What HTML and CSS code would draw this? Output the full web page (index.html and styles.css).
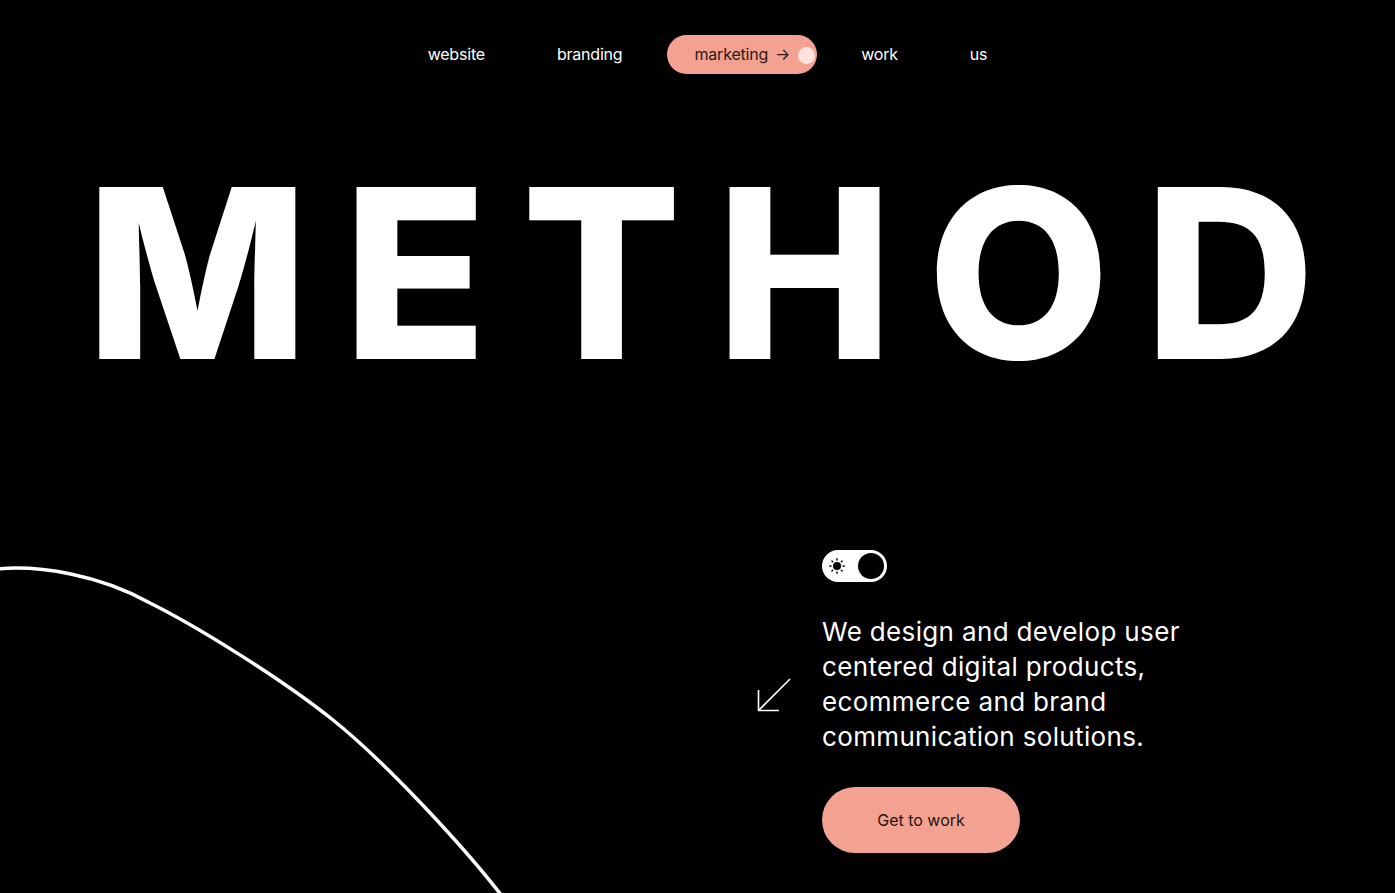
FILE: index.html
```html
<!DOCTYPE html>
<html lang="en">
<head>
<meta charset="utf-8">
<title>Method</title>
<link rel="stylesheet" href="styles.css">
</head>
<body>
<div class="page">
  <svg class="curve" width="1395" height="893" viewBox="0 0 1395 893" aria-hidden="true">
    <path d="M-4 569 C 40 565, 100 575, 150 603 C 200 628, 283 680, 333 720 C 383 760, 460 842, 502 896" fill="none" stroke="#fff" stroke-width="3.5"/>
  </svg>
  <nav class="nav">
    <a class="nav-item">website</a>
    <a class="nav-item">branding</a>
    <a class="nav-item nav-active">marketing <span class="nav-arrow">→</span><span class="nav-dot"></span></a>
    <a class="nav-item">work</a>
    <a class="nav-item">us</a>
  </nav>
  <h1 class="title">
    <span>M</span><span>E</span><span>T</span><span>H</span><span>O</span><span>D</span>
  </h1>
  <section class="intro">
    <div class="toggle">
      <svg class="sun" width="16" height="16" viewBox="0 0 16 16" aria-hidden="true">
        <circle cx="8" cy="8" r="4" fill="#000"/>
        <g stroke="#000" stroke-width="1.4" stroke-linecap="round">
          <line x1="8" y1="0.8" x2="8" y2="2"/>
          <line x1="8" y1="14" x2="8" y2="15.2"/>
          <line x1="0.8" y1="8" x2="2" y2="8"/>
          <line x1="14" y1="8" x2="15.2" y2="8"/>
          <line x1="2.9" y1="2.9" x2="3.7" y2="3.7"/>
          <line x1="12.3" y1="12.3" x2="13.1" y2="13.1"/>
          <line x1="2.9" y1="13.1" x2="3.7" y2="12.3"/>
          <line x1="12.3" y1="3.7" x2="13.1" y2="2.9"/>
        </g>
      </svg>
      <span class="knob"></span>
    </div>
    <svg class="down-arrow" width="34" height="34" viewBox="0 0 34 34" aria-hidden="true">
      <g fill="none" stroke="#fff" stroke-width="1.6">
        <line x1="33" y1="1" x2="1.5" y2="32.5"/>
        <polyline points="1.5,12 1.5,32.5 22,32.5"/>
      </g>
    </svg>
    <p class="lead">We design and develop user centered digital products, ecommerce and brand communication solutions.</p>
    <a class="cta">Get to work</a>
  </section>
</div>
</body>
</html>
```
FILE: styles.css
```css
* { box-sizing: border-box; }
html, body {
  margin: 0;
  padding: 0;
  background: #000;
}
body {
  font-family: "Inter", "DejaVu Sans", sans-serif;
  color: #fff;
}
.page {
  position: relative;
  width: 1395px;
  height: 893px;
  overflow: hidden;
}
.curve {
  position: absolute;
  left: 0;
  top: 0;
  pointer-events: none;
}
.nav {
  display: flex;
  justify-content: center;
  gap: 16px;
  padding: 35px 0 0 20px;
  height: 74px;
}
.nav-item {
  display: flex;
  align-items: center;
  height: 39px;
  padding: 0 28px;
  font-size: 16px;
  color: #fff;
  white-space: nowrap;
  letter-spacing: -0.2px;
  padding-bottom: 1px;
}
.nav-active {
  background: #f3a291;
  color: #2b1a16;
  border-radius: 20px;
  padding: 0 2px 1px 28px;
}
.nav-arrow {
  margin-left: 7px;
  font-size: 16px;
}
.nav-dot {
  width: 17px;
  height: 17px;
  border-radius: 50%;
  background: #fde3dc;
  margin-left: 8px;
  margin-top: 3px;
}
.title {
  margin: 81px 0 0 0;
  padding: 0 80px 0 86px;
  display: flex;
  justify-content: space-between;
  font-family: "Inter", sans-serif;
  font-weight: 800;
  font-size: 236px;
  line-height: 236px;
  height: 236px;
  color: #fff;
}
.intro {
  display: grid;
  grid-template-columns: 32px auto;
  column-gap: 32px;
  margin: 159px 0 0 758px;
  justify-content: start;
}
.toggle {
  grid-column: 2;
  width: 65px;
  height: 32px;
  border-radius: 16px;
  background: #fff;
  display: flex;
  align-items: center;
  padding: 0 3px 0 7px;
  justify-content: space-between;
}
.knob {
  width: 26px;
  height: 26px;
  border-radius: 50%;
  background: #000;
}
.down-arrow {
  grid-column: 1;
  grid-row: 2;
  align-self: start;
  margin-top: 96px;
  margin-left: -1px;
}
.lead {
  grid-column: 2;
  grid-row: 2;
  margin: 32px 0 0 0;
  width: 400px;
  font-size: 26px;
  line-height: 35px;
  letter-spacing: 0.35px;
}
.cta {
  grid-column: 2;
  margin-top: 33px;
  width: 198px;
  height: 66px;
  border-radius: 33px;
  background: #f3a291;
  color: #1d1513;
  font-size: 16px;
  display: flex;
  align-items: center;
  justify-content: center;
}
```
